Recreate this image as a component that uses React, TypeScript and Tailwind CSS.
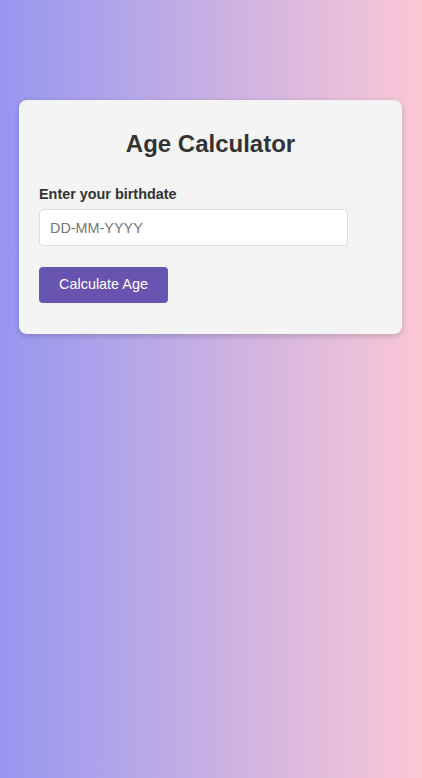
export default function App() {
  return (
    <div
      className="min-h-screen w-full pl-[19px] pr-[20px] pt-[100px] bg-gradient-to-r from-[#9796f0] to-[#fbc7d4]"
      style={{ fontFamily: '"Liberation Sans", Arial, sans-serif' }}
    >
      <div className="rounded-[8px] bg-[#f4f4f4] px-5 pt-[30px] pb-[31px] shadow-[0_2px_6px_rgba(0,0,0,0.18)]">
        <h2 className="text-center text-[24px] font-bold leading-[28px] text-[#333333]">Age Calculator</h2>
        <label className="mt-[28px] block text-[14.4px] font-bold leading-[17px] text-[#333333]">
          Enter your birthdate
        </label>
        <input
          type="text"
          placeholder="DD-MM-YYYY"
          className="mt-[6px] block h-[37px] w-[90%] rounded-[4px] border border-[#dddddd] bg-white px-[10px] text-[14.4px] text-[#333] placeholder:text-[#757575] outline-none"
        />
        <button className="mt-[21px] block h-[36px] w-[129px] rounded-[4px] bg-[#6753b0] text-[14.4px] text-white">
          Calculate Age
        </button>
      </div>
    </div>
  );
}
